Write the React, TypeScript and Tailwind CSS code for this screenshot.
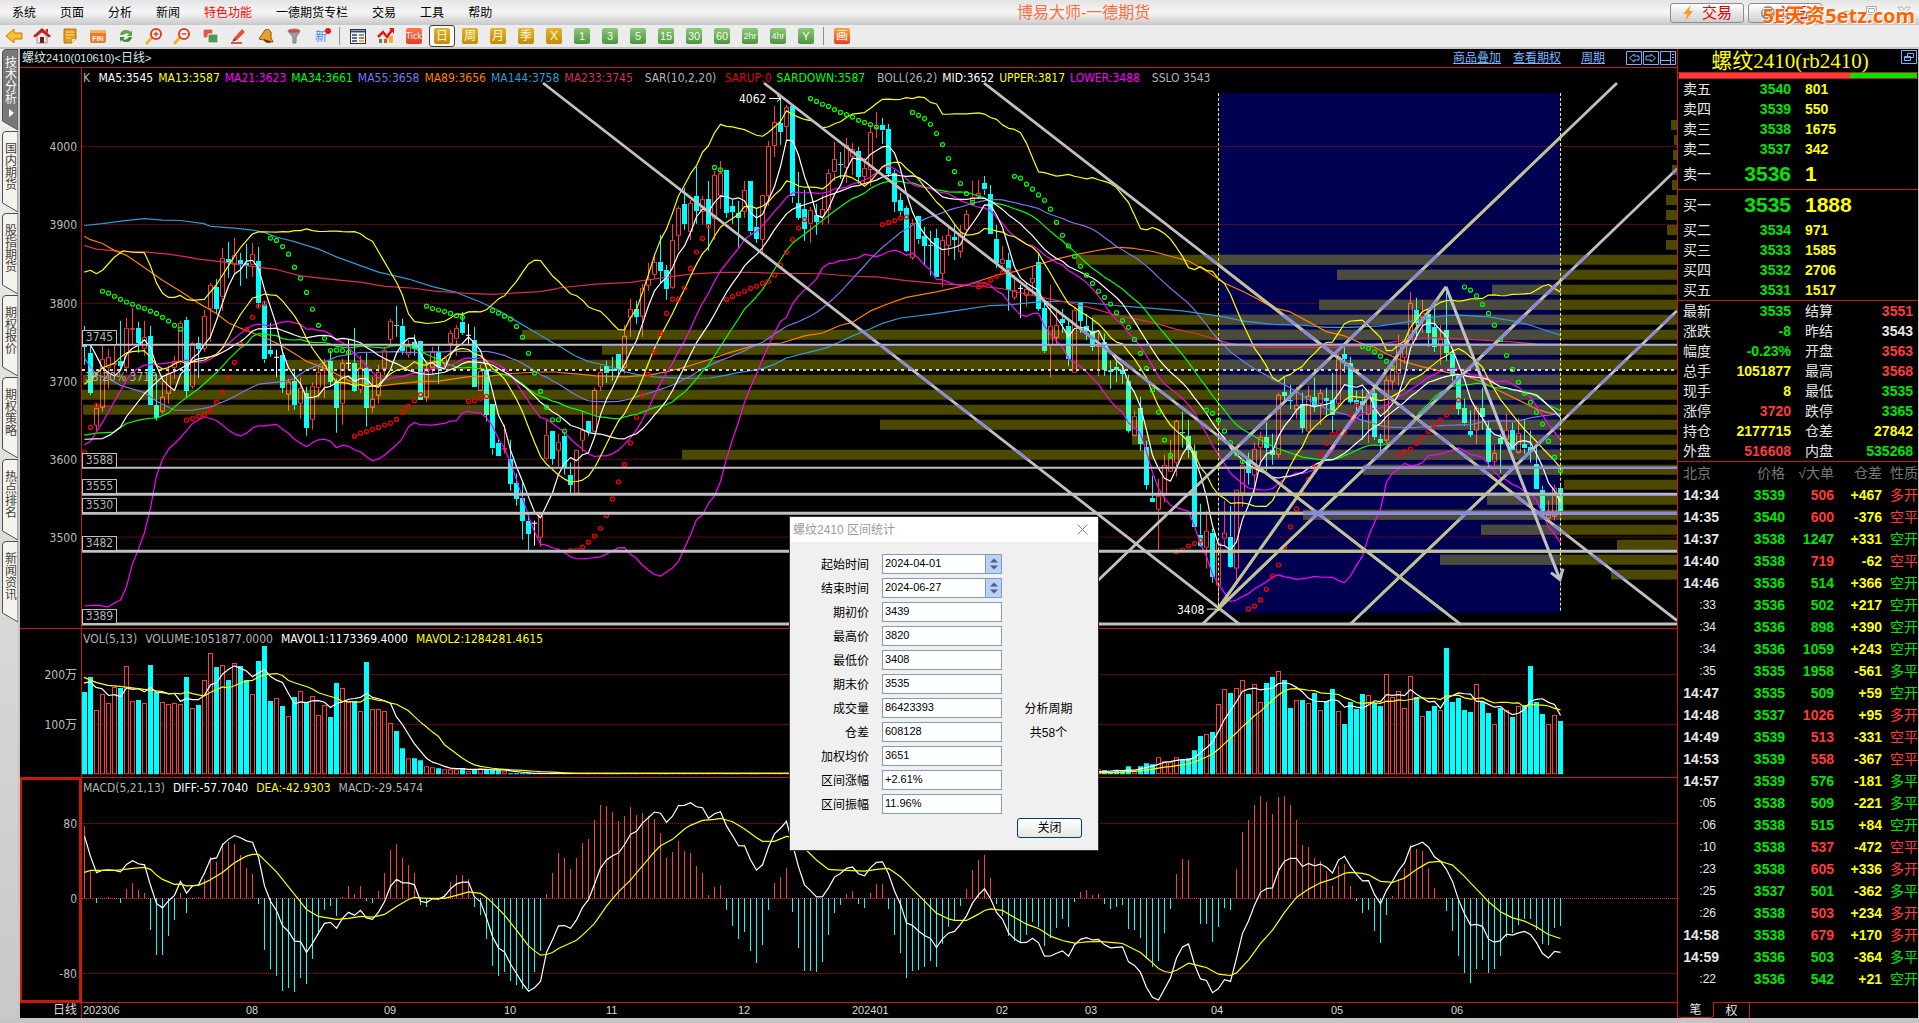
import { useState } from "react";
import type { ReactNode } from "react";
import { clsx } from "clsx";

type Kind = "u" | "d" | "w";
type Point = [number, number];

interface Candle {
  kind: Kind;
  high: number;
  top: number;
  bottom: number;
  low: number;
}

interface Grid {
  x: number;
  y: number;
  sx: number;
  sy: number;
}

// The history is stored in three sections, each on its own grid
const GRIDS: Grid[] = [
  { x: 0, y: 40, sx: 2.8, sy: 2.613 },
  { x: 560, y: 70, sx: 2.8, sy: 2.8 },
  { x: 1120, y: 70, sx: 2.8, sy: 2.8 }
];

const LEFT = 82;
const WIDTH = 1595;
const barX = (i: number) => 84.5 + i * 6;

// kind + high,top,bottom,low
const CANDLES = [
  `d747,797,803,850 d797,818,923,927 u950,962,1008,1022 u800,834,961,972 u808,829,858,912 u800,845,850,886
  d733,838,850,862 u726,753,857,870 u700,752,755,797 d738,752,790,817 u735,775,807,825 d747,773,953,953
  d872,955,988,996 u893,933,972,978 u853,870,925,950 u826,838,857,885 u735,740,843,848 d724,732,918,933
  u790,793,908,912 d775,793,808,883 u706,720,805,815 u635,641,703,790 d625,645,702,716 u543,570,673,708
  d527,573,583,622 u517,562,588,612 d556,575,585,642 d533,583,590,625 u530,560,590,620 d540,578,687,697
  d683,690,835,843 d740,810,820,828 w810,828,828,880 d808,822,908,922 u885,893,928,970 d862,890,953,966
  u882,910,952,990 d908,922,1013,1036 u897,905,994,1018 u852,867,910,935 u833,850,865,935 d813,838,893,908
  d885,893,962,1026 u833,845,952,1006 w780,845,845,860 d753,845,917,920 u827,857,915,922 d818,857,962,1012
  u880,937,960,975 u850,867,930,952 u803,810,860,875 u728,733,782,800 d695,745,748,775 d730,747,813,822
  u783,797,823,830 d770,790,808,825 d787,787,942,942 u845,860,935,945 u802,815,857,872 d798,815,853,900
  u825,830,845,857 u758,765,795,832 u745,753,783,825 d710,737,765,770 w742,770,770,795 d750,783,907,907
  u850,865,918,918 d862,862,980,997 d952,952,1068,1085 d1045,1052,1085,1085 u1005,1066,1068,1083 d1045,1095,1160,1178
  d1133,1158,1200,1217 d1158,1197,1257,1307 d1240,1257,1290,1337 w1257,1262,1262,1322 u1237,1240,1300,1325
  u990,1033,1097,1100 d1022,1022,1095,1110 u1030,1050,1073,1115`,
  `d1013,1025,1115,1135 d1100,1133,1162,1188 u1065,1065,1187,1187 u957,1007,1038,1070 d983,983,1015,1025
  u890,897,1015,1020 u830,845,887,900 d815,830,850,877 d803,838,843,870 d795,795,840,858 u715,745,835,850
  u640,670,695,748 d648,670,692,710 u600,610,690,747 u540,585,605,620 u515,538,575,583 d463,538,562,600
  d545,560,612,643 u430,475,610,612 u380,387,465,503 d330,375,430,447 u363,373,453,475 d272,352,395,430
  u352,360,395,433 d310,360,432,507 u283,293,415,475 u255,287,350,390 d280,280,400,413 d365,380,398,430
  d368,400,413,497 u310,335,397,415 d312,312,453,463 d385,440,473,485 u350,350,477,515 u200,212,353,380
  u100,145,213,243 d80,147,173,210 u98,103,160,197 d102,102,355,372 d285,373,415,420 d335,390,445,478
  u383,393,433,483 d375,405,425,462 u350,390,412,433 u278,287,390,430 u202,250,287,310 d230,262,265,305
  u190,210,275,315 u203,222,245,295 d215,228,300,320 u245,275,300,322 u155,173,280,325 u118,159,161,190
  d133,155,170,207 d150,165,290,300 d280,288,370,397 d345,365,397,412 d380,387,507,510 u418,427,525,532
  d410,410,475,487 d440,465,493,550 d450,490,494,577 d445,470,580,580 u465,475,570,607 u440,463,493,520
  d430,468,475,533 u435,455,507,525 u393,402,447,455 u310,355,373,378 u307,343,350,362 d297,317,335,350
  d323,347,458,458 d435,473,540,555 u493,530,545,565 d513,532,617,675 u573,615,637,645 w603,610,610,693
  u595,613,633,663 u550,583,597,630 d512,537,668,675 d645,667,787,793 u603,717,773,860 u665,715,750,770
  d670,697,707,735 d695,717,810,830 u665,673,850,852 d653,653,702,735 d683,717,730,757 d695,730,775,787
  u735,770,772,857 d740,762,840,857 d815,840,845,892 d812,832,840,873`,
  `d830,840,852,880 d855,870,1010,1015 u955,970,1027,1027 d915,945,1047,1067 d1040,1055,1162,1175
  d1137,1198,1210,1210 u1145,1193,1233,1350 u1078,1107,1195,1213 u1035,1087,1127,1127 u980,983,1100,1140
  d958,1013,1016,1057 d980,1025,1063,1087 d1050,1067,1280,1280 d1215,1303,1333,1335 u1235,1290,1337,1397
  d1285,1297,1420,1435 u1325,1325,1445,1500 u1208,1297,1315,1333 d1220,1308,1392,1395 u1177,1177,1398,1430
  u1093,1105,1185,1223 d1072,1090,1128,1163 u1045,1060,1135,1190 u1013,1027,1057,1100 d988,1027,1057,1123
  d1018,1063,1078,1105 u905,910,1077,1087 d862,902,913,930 d882,925,928,950 u887,937,950,978 d905,935,1002,1015
  u885,913,1013,1018 d862,915,940,957 u893,905,935,993 d890,917,925,972 d848,925,968,1015 u795,800,933,940
  d770,795,810,848 d803,820,930,935 d900,925,937,958 d893,927,937,1035 u897,903,965,1043 d893,903,1027,1035
  d1020,1033,1045,1075 u860,867,1037,1043 u815,835,873,895 u742,773,850,885 u755,770,805,822 u622,653,770,772
  d638,672,707,755 u645,680,693,735 d680,683,735,775 d663,720,775,790 u713,753,770,825 d615,728,793,815
  d785,795,857,870 d857,857,948,967 d922,947,990,997 d955,1010,1020,1028 u940,947,1010,1047 d890,945,970,1007
  d983,1003,1097,1113 u1050,1073,1097,1110 d1020,1030,1047,1127 u963,1008,1035,1050 d987,1007,1063,1063
  u973,1015,1070,1075 d980,1048,1060,1075 d1010,1055,1070,1100 d1050,1103,1172,1172 d1165,1177,1237,1240
  u1207,1245,1255,1262 u1162,1170,1250,1262 d1160,1170,1235,1235`
];

const candles: Candle[] = CANDLES.flatMap((block, s) =>
  block
    .trim()
    .split(/\s+/)
    .map((item) => {
      const [high, top, bottom, low] = item
        .slice(1)
        .split(",")
        .map((v) => GRIDS[s].y + Number(v) / GRIDS[s].sy);
      return { kind: item[0] as Kind, high, top, bottom, low };
    })
);

const nums = (src: string) => src.trim().split(/\s+/).map(Number);

const trace = (...parts: string[]): Point[] =>
  parts.flatMap((part, s) =>
    part
      .trim()
      .split(/\s+/)
      .filter(Boolean)
      .map((pair): Point => {
        const [x, y] = pair.split(",").map(Number);
        const g = GRIDS[s];
        return [g.x + x / g.sx, g.y + y / g.sy];
      })
  );

const toPath = (points: Point[]) => "M" + points.map(([x, y]) => `${x.toFixed(1)} ${y.toFixed(1)}`).join("L");

const closes = candles.map((c) => (c.kind === "u" ? c.top : c.bottom));

function average(values: number[], n: number): Point[] {
  const out: Point[] = [];
  for (let i = n - 1; i < values.length; i++) {
    const sum = values.slice(i - n + 1, i + 1).reduce((a, b) => a + b, 0);
    out.push([barX(i), sum / n]);
  }
  return out;
}

function band(values: number[], n: number, k: number): Point[] {
  return average(values, n).map(([x, mid], j) => {
    const part = values.slice(j, j + n);
    const dev = Math.sqrt(part.reduce((a, v) => a + (v - mid) ** 2, 0) / n);
    return [x, mid + k * dev];
  });
}

const MA_LINES = [
  {
    color: "#2f9bd8",
    d: toPath(
      trace(
        "236,485 287,480 345,473 404,467 455,471 505,472 570,480 590,487 656,492 707,497 740,503 774,515 824,527 892,547 942,567 1009,590 1060,607 1144,625 1211,645 1278,660 1345,685 1396,707 1446,735 1496,763 1560,798",
        "0,775 40,800 80,817 130,828 180,845 214,853 264,860 350,864 420,863 466,855 499,848 567,837 600,825 634,807 701,790 751,777 819,745 869,725 903,710 953,695 1037,685 1138,670 1205,660 1256,658 1340,650 1390,648 1474,652 1557,660",
        "0,661 91,668 175,675 242,685 292,692 343,703 427,713 511,715 578,721 645,721 729,717 796,707 847,698 914,688 948,687 1032,692 1099,703 1149,715 1199,732 1233,743"
      )
    )
  },
  {
    color: "#d83050",
    d: toPath(
      trace(
        "236,537 270,547 337,553 404,554 472,560 522,567 556,573 623,580 690,590 774,600 841,617 942,627 1009,633 1077,644 1160,649 1211,656 1295,662 1379,665 1446,661 1513,658 1560,650",
        "0,610 100,600 197,595 281,583 365,572 449,567 533,567 617,570 735,571 819,578 886,580 970,590 1054,598 1121,603 1188,607 1239,613 1306,628 1373,642 1440,655 1507,672 1557,687",
        "0,690 57,700 108,712 158,727 208,737 259,752 309,767 376,776 444,777 595,777 679,773 746,765 796,757 864,750 931,752 1015,757 1099,762 1166,768 1233,772"
      )
    )
  },
  {
    color: "#ff8000",
    d: toPath(
      trace(
        "236,513 253,522 287,532 320,550 354,563 404,595 455,628 505,657 556,688 606,715 640,740 690,760 740,777 790,800 824,820 858,840 892,852 925,865 975,890 1009,902 1060,905 1130,897 1177,893 1228,892 1312,880 1379,878 1429,872 1513,868 1560,868",
        "0,848 60,853 100,857 180,860 250,855 300,845 350,833 416,812 466,795 550,770 620,765 685,745 735,737 785,715 819,707 869,675 919,655 970,637 1054,622 1138,603 1222,575 1272,565 1340,545 1390,530 1440,518 1507,505 1557,497",
        "0,497 40,500 90,508 141,522 192,535 242,563 292,597 343,620 376,637 427,665 477,678 527,705 578,733 628,745 679,767 713,777 746,795 796,817 847,832 897,843 931,850 965,855 1015,875 1065,900 1116,925 1166,950 1199,960 1233,968"
      )
    )
  },
  {
    color: "#7878f0",
    d: toPath([
      ...trace(
        "236,832 270,875 304,885 337,903 404,922 440,945 488,968 539,968 589,960 640,940 690,915 724,900 790,893 824,885 858,863 892,850 942,828 1009,817 1110,815"
      ),
      ...average(closes, 55)
    ])
  },
  {
    color: "#00ff00",
    d: toPath([
      ...trace(
        "236,1033 270,1028 320,1025 354,1003 388,994 421,989 438,989 472,975 488,960 522,935 556,912 606,870 640,835 673,805 690,795 707,775 724,768 774,773"
      ),
      ...average(closes, 34)
    ])
  },
  {
    color: "#ff00ff",
    d: toPath([
      ...trace(
        "236,1058 253,1050 287,1000 320,945 354,890 371,868 404,850 455,846 505,840 522,837 556,843"
      ),
      ...average(closes, 21)
    ])
  },
  {
    color: "#ffffff",
    d: toPath([
      ...trace("236,1044 287,1042 310,1032 337,1012 354,985 404,925 455,880 500,862 550,835 606,825 640,808"),
      ...average(closes, 26)
    ])
  },
  {
    color: "#ffff00",
    d: toPath([
      ...trace("236,900 253,888 270,873 287,857 320,845 337,830 354,818 371,815 404,812 421,830"),
      ...average(closes, 13)
    ])
  },
  {
    color: "#ffff00",
    d: toPath([
      ...trace(
        "236,607 253,602 270,611 287,602 320,568 345,551 371,555 404,556 421,590 438,635 455,662 472,673 488,673 505,668 522,678 539,681 572,678 606,640 623,615 640,590"
      ),
      ...band(closes, 26, -2)
    ])
  },
  {
    color: "#ff00ff",
    d: toPath([
      ...trace(
        "236,1480 270,1478 304,1482 320,1472 337,1465 354,1430 371,1370 388,1330 404,1290 421,1225 438,1140 455,1097 472,1070 505,1040 539,1003 572,985 606,995 640,1020"
      ),
      ...band(closes, 26, 2)
    ])
  },
  {
    color: "#ffffff",
    d: toPath([...trace("253,797 270,826 287,857"), ...average(closes, 5)])
  }
];

// section, first bar, trend, values
const SAR: [number, number, Kind, string][] = [
  [0, 0, "u", "1078 1013 955"],
  [0, 3, "d", "657 662 670 678 685 691 698 702 709 715 725 735 746 756"],
  [0, 17, "u", "994 990 984 979 968 947 921 884 843 796 757 725 696 688"],
  [0, 31, "d", "518 524 540 560 594 623 660 704 746 780 812 811 812 817"],
  [0, 45, "u", "1036 1028 1024 1018 1013 1007 1002 992 973 958 943 927"],
  [0, 57, "d", "696 702 706 710 715 721 725"],
  [0, 64, "u", "945 943 937 932"],
  [0, 68, "d", "707 714 722 730 749 777 819 871 919 960 993 993"],
  [1, 80, "d", "1012"],
  [1, 81, "u", "1347 1345 1337 1323 1306 1284 1248 1202 1154 1105 1045 973 911 853 790 738 682 642 642 611 556 510 472 438"],
  [1, 105, "d", "273 280"],
  [1, 107, "u", "643 635 627 620 612 606 598 592 575 547 510 475 443 419"],
  [1, 121, "d", "80 88 96 102 111 119 125 132 141 147 153 160"],
  [1, 133, "u", "433 427 422 415 412"],
  [1, 138, "d", "119 127 136 152 178 209 248 285 318 346 371"],
  [1, 149, "u", "607 600 589 578 567 562"],
  [1, 155, "d", "298 303 320 334 350 365 390 427 463 493 522 550 575 598 620 637 656 680"],
  [2, 173, "d", "702 721 755 794 836 897 959 1037 1080"],
  [2, 182, "u", "1350 1345 1334 1327 1318"],
  [2, 187, "d", "953 962 981 1012 1044 1075 1097"],
  [2, 194, "u", "1510 1502 1485 1455 1418 1387 1337 1280 1230 1187 1147 1112 1077 1046 1021 1015 1015 967 937"],
  [2, 213, "d", "775 780 790 802 816 833"],
  [2, 219, "u", "1077 1069 1062 1046 1029 1013 995 981 967 945 925"],
  [2, 230, "d", "608 617 633 657 682 715 755 800 839 875 906 931 959 992 1040 1085 1122"]
];

// left edge of each price-distribution bar, top to bottom
const CHIPS = nums(
  "1671 1674 1673 1672 1672 1666 1666 1667 1666 1076 1337 1492 1319 1092 522 602 286 83 82 83 880 1132 682 1363 1564 1487 1303 1481 1617 1440 1611"
);

const lowerY = (v: number) => 620 + v / 3;

const volume = [
  ...nums(`216 171 271 223 250 202 204 139 244 240 250 135 217 247 253 250 253 171 265 255 181 100 141 136 180 130 138
  180 223 123 78 243 235 258 289 231 214 247 229 286 256 291 189 205 247 244 274 126 268 268 274 310 333 384 415 414
  420 439 442 444 448 446 446 444 454 448 445 448 450 451 453 458`),
  ...Array(96).fill(460),
  ...nums(`449 448 451 455 452 452 438 452 438 429 433 412 423 425 412 420 415 390 348 343 336 253 208 219 205 181 222
  193 247 189 171 154 180 264 241 240 250 219 271 243 207 274 312 246 267 222 226 250 258 163 232 214 265 169 231 289
  273 258 271 84 246 234 270 276 193 246 279 313 264 271 291 259 256 138 246 282 313 286 303`)
].map(lowerY);

const histogram = nums(`618 751 848 834 831 834 848 807 789 810 819 930 1005 1005 948 900 819 879 836 831 777 711 726
  669 666 672 705 744 762 852 990 1047 1068 1113 1103 1116 1074 1092 1017 935 870 858 888 831 798 822 798 842 848 813
  759 690 672 714 735 759 855 860 837 839 822 786 766 766 777 861 885 957 1038 1068 1056 1083 1095 1107 1107 1056 993
  822 759 699 714 747 714 669 657 600 555 558 576 603 588 561 585 579 588 597 640 714 696 663 693 699 738 759 825 801
  795 870 918 957 936 993 1029 975 870 789 771 744 876 984 1053 1053 1056 1026 945 879 855 822 813 852 864 819 792 792
  867 945 999 1074 1053 1050 1041 1023 1041 972 921 900 858 807 750 720 705 774 852 888 948 963 966 945 906 921 978
  954 924 897 921 846 816 810 825 822 852 867 861 855 927 930 954 1014 1041 1023 939 867 762 717 720 834 912 912 966
  921 864 870 747 636 600 555 528 546 582 531 528 555 600 675 681 714 723 753 798 738 732 798 843 879 870 933 969 885
  828 777 744 675 687 693 744 804 834 873 933 1008 1059 1089 1047 1020 1059 1047 1008 951 939 915 897 897 930 972 975
  924 918`).map(lowerY);

const DEA_KEYS = `0:757 1:751 5:751 8:745 10:742 11:748 12:765 13:778 15:793 16:792 17:797 19:796 21:779 23:757 25:728
  27:708 28:703 29:703 30:720 32:755 34:800 36:845 37:868 39:889 42:898 44:895 46:889 48:891 50:883 52:859 54:838
  55:832 57:835 60:835 62:826 64:815 66:820 67:832 68:848 70:885 72:930 74:977 75:992 76:1005 77:1003 78:997 79:985
  82:960 83:945 85:910 87:858 89:815 91:780 93:737 95:695 96:677 98:658 100:627 101:616 103:601 105:598 106:595
  108:605 110:627 112:653 113:664 115:664 117:649 118:652 119:665 120:685 122:720 124:748 127:751 130:753 132:748
  134:745 136:770 138:807 140:843 142:879 144:896 145:901 147:901 149:882 150:871 151:866 153:871 155:892 157:912
  159:925 161:948 163:961 165:969 167:965 169:964 173:970 176:997 178:1028 179:1045 180:1054 181:1057 182:1050
  184:1029 187:1042 189:1062 191:1066 192:1058 194:1020 196:970 198:930 200:877 202:832 204:807 206:788 208:777
  210:760 211:757 213:760 214:764 216:784 218:787 220:774 222:748 224:727 226:724 228:735 230:769 232:807 234:845
  236:875 238:893 240:903 242:920 244:943 246:955`
  .split(/\s+/)
  .map((k) => k.split(":").map(Number));

const ZERO = lowerY(835);

const dea: number[] = histogram.map((_, i) => {
  const next = DEA_KEYS.findIndex(([at]) => at >= i);
  const [b, vb] = DEA_KEYS[next];
  if (b === i) return lowerY(vb);
  const [a, va] = DEA_KEYS[next - 1];
  return lowerY(va + ((vb - va) * (i - a)) / (b - a));
});
const diff = dea.map((v, i) => v + (histogram[i] - ZERO) / 2);

const wicks = (kind: Kind) =>
  candles
    .map((c, i) => {
      if (c.kind !== kind) return "";
      const x = barX(i);
      return `M${x} ${Math.round(c.high)}V${Math.round(c.top)}M${x} ${Math.round(c.bottom)}V${Math.round(c.low)}`;
    })
    .join("");

const bodies = (kind: Kind, inset: number) =>
  candles
    .map((c, i) => {
      if (c.kind !== kind) return "";
      const x = barX(i) - 2.5 + inset;
      const y = Math.round(c.top) + inset;
      const h = Math.max(1, Math.round(c.bottom - c.top) - inset * 2);
      const w = 5 - inset * 2;
      return `M${x} ${y}h${w}v${h}h${-w}z`;
    })
    .join("");

const UP_WICKS = wicks("u");
const DOWN_WICKS = wicks("d");
const FLAT_WICKS = wicks("w");
const UP_BODIES = bodies("u", 0.5);
const DOWN_BODIES = bodies("d", 0);

function Candles({ up, down, clip }: { up: string; down: string; clip?: string }) {
  return (
    <g clipPath={clip} fill="none" shapeRendering="crispEdges">
      <path d={UP_WICKS} stroke={up} />
      <path d={UP_BODIES} stroke={up} />
      <path d={DOWN_WICKS} stroke={down} />
      <path d={DOWN_BODIES} fill={down} />
    </g>
  );
}

function TrendLines({ stroke, clip }: { stroke: string; clip?: string }) {
  return (
    <g clipPath={clip} stroke={stroke} fill="none">
      <path d="M82 345H1677M82 468H1677" strokeWidth="2" />
      <path d="M82 494.5H1677M82 513.5H1677M82 551.5H1677M82 624.5H1677" strokeWidth="3" />
      <path
        d="M543 83L1240 625M764 83L1461 625M984 83L1677 621M1052 625L1617 83M1202 625L1677 169M1350 625L1677 311M1218 609L1446 287"
        strokeWidth="2.8"
      />
    </g>
  );
}

function Rows({ ys }: { ys: number[] }) {
  return (
    <path
      d={ys.map((y) => `M82 ${y}H1677`).join("")}
      stroke="#b00000"
      strokeDasharray="1 1"
      shapeRendering="crispEdges"
    />
  );
}

interface PaneProps {
  top: number;
  height: number;
  labels: [string, number][];
  legend: [string, string][];
  active?: boolean;
  wide?: boolean;
  children: ReactNode;
  overlay?: ReactNode;
}

function Pane({ top, height, labels, legend, active, wide, children, overlay }: PaneProps) {
  return (
    <section className="flex min-h-0 border-t border-[#c81818]">
      <div
        className={clsx(
          "relative w-[62px] shrink-0 border-r border-[#c81818] text-[#bcbcbc]",
          active && "inset-ring-2 inset-ring-[#c81808]"
        )}
      >
        {labels.map(([text, y]) => (
          <span
            key={text}
            className="absolute right-1 -translate-y-1/2 [font-family:'DejaVu_Sans_Condensed','Noto_Sans','Noto_Sans_CJK_SC',sans-serif]"
            style={{ top: `${((y - top) / height) * 100}%` }}
          >
            {text}
          </span>
        ))}
      </div>
      <div className="relative min-w-0 flex-1">
        <svg
          className="absolute inset-0 h-full w-full"
          viewBox={`${LEFT} ${top} ${WIDTH} ${height}`}
          preserveAspectRatio="none"
        >
          {children}
        </svg>
        <div
          className={clsx(
            "absolute top-px left-px flex whitespace-nowrap leading-[18px] [font-family:'DejaVu_Sans_Condensed','Noto_Sans',sans-serif]",
            wide ? "gap-2" : "gap-[5px]"
          )}
        >
          {legend.map(([text, color], i) => (
            <span key={i} style={{ color }}>
              {text}
            </span>
          ))}
        </div>
        {overlay}
      </div>
    </section>
  );
}

const LEVELS: [string, number][] = [
  ["3745", 345],
  ["3588", 468],
  ["3555", 494],
  ["3530", 513],
  ["3482", 551],
  ["3389", 624]
];

const at = (x: number, y: number) => ({
  left: `${((x - LEFT) / WIDTH) * 100}%`,
  top: `${((y - 68) / 560) * 100}%`
});

function PricePane() {
  return (
    <Pane
      top={68}
      height={560}
      labels={[
        ["4000", 147],
        ["3900", 225],
        ["3800", 304],
        ["3700", 382],
        ["3600", 460],
        ["3500", 538]
      ]}
      legend={[
        ["K\u00a0", "#b4b4b4"],
        ["MA5:3545", "#ffffff"],
        ["MA13:3587", "#ffff00"],
        ["MA21:3623", "#ff00ff"],
        ["MA34:3661", "#00ff00"],
        ["MA55:3658", "#7878f0"],
        ["MA89:3656", "#ff8000"],
        ["MA144:3758", "#2f9bd8"],
        ["MA233:3745", "#d83050"],
        ["\u00a0\u00a0SAR(10,2,20)", "#b4b4b4"],
        ["\u00a0SARUP:0", "#e00000"],
        ["SARDOWN:3587", "#00ff00"],
        ["\u00a0\u00a0BOLL(26,2)", "#b4b4b4"],
        ["MID:3652", "#ffffff"],
        ["UPPER:3817", "#ffff00"],
        ["LOWER:3488", "#ff00ff"],
        ["\u00a0\u00a0SSLO 3543", "#b4b4b4"]
      ]}
      overlay={
        <div className="leading-[13px] text-[#b4b4b4] [font-family:'DejaVu_Sans_Condensed','Noto_Sans',sans-serif]">
          {LEVELS.map(([text, y]) => (
            <span
              key={text}
              className="absolute w-[35px] -translate-y-full border border-[#c0c0c0] bg-black text-center"
              style={at(82, y)}
            >
              {text}
            </span>
          ))}
          <span className="absolute -translate-y-1/2" style={at(85, 377)}>
            38.20% 3713
          </span>
          <span className="absolute -translate-y-1/2 text-white" style={at(739, 99)}>
            4062
          </span>
          <span className="absolute -translate-y-1/2 text-white" style={at(1177, 610)}>
            3408
          </span>
        </div>
      }
    >
      <defs>
        <clipPath id="chips">
          {CHIPS.map((x, k) => (
            <rect key={k} x={x} y={120 + k * 15} width={1677 - x} height="10" />
          ))}
        </clipPath>
        <clipPath id="range">
          <rect x="1218" y="93" width="343" height="520" />
        </clipPath>
      </defs>
      <rect x="1218" y="93" width="343" height="520" fill="#000050" />
      <Rows ys={[146.5, 224.5, 303.5, 381.5, 459.5, 537.5]} />
      <rect x="82" y="68" width="1595" height="560" fill="#4b4800" clipPath="url(#chips)" />
      <g clipPath="url(#range)">
        <rect x="82" y="68" width="1595" height="560" fill="#4b4a3e" clipPath="url(#chips)" />
      </g>
      <Candles up="#ff3c3c" down="#00ffff" />
      <Candles up="#ff7830" down="#4bffb0" clip="url(#chips)" />
      <path d={FLAT_WICKS} stroke="#fff" shapeRendering="crispEdges" />
      {candles.map((c, i) =>
        c.kind === "w" ? <rect key={i} x={barX(i) - 2.5} y={Math.round(c.top)} width="5" height="1" fill="#fff" /> : null
      )}
      {MA_LINES.map((line, i) => (
        <path key={i} d={line.d} stroke={line.color} strokeWidth="1.2" strokeLinejoin="round" fill="none" />
      ))}
      {SAR.flatMap(([s, first, kind, src]) =>
        nums(src).map((v, j) => (
          <circle
            key={first + j}
            cx={barX(first + j)}
            cy={GRIDS[s].y + v / GRIDS[s].sy}
            r="2"
            fill="none"
            stroke={kind === "u" ? "#ff0000" : "#00ff00"}
            strokeWidth="1.2"
          />
        ))
      )}
      <path d="M82 370H1677" stroke="#d0d0d0" strokeWidth="2" strokeDasharray="3 4" shapeRendering="crispEdges" />
      <TrendLines stroke="#c0c0c0" />
      <TrendLines stroke="#c0c090" clip="url(#range)" />
      <TrendLines stroke="#8888e0" clip="url(#chips)" />
      <path
        d="M1218.5 93V613M1560.5 93V613"
        stroke="#ffff00"
        strokeDasharray="3 2"
        shapeRendering="crispEdges"
      />
      <path d="M1446 287L1560 580M1551 573L1560 580L1563 569" stroke="#c0c0c0" strokeWidth="3" fill="none" />
      <path d="M769 98.5H781M777 95.5l4 3l-4 3M1207 609.5H1216" stroke="#fff" fill="none" />
    </Pane>
  );
}

function VolumePane() {
  const solid = volume.map((y, i) => (candles[i].kind === "d" ? `M${barX(i) - 2.5} ${y.toFixed(0)}h5V774h-5z` : ""));
  const hollow = volume.map((y, i) =>
    candles[i].kind === "d" ? "" : `M${barX(i) - 2} ${Math.round(y) + 0.5}h4V773.5h-4z`
  );
  return (
    <Pane
      top={629}
      height={148}
      wide
      labels={[
        ["200万", 675],
        ["100万", 725]
      ]}
      legend={[
        ["VOL(5,13)", "#b4b4b4"],
        ["VOLUME:1051877.0000", "#b4b4b4"],
        ["MAVOL1:1173369.4000", "#ffffff"],
        ["MAVOL2:1284281.4615", "#ffff00"]
      ]}
    >
      <Rows ys={[674.5, 724.5]} />
      <path d={solid.join("")} fill="#00ffff" />
      <path d={hollow.join("")} fill="none" stroke="#ff3c3c" />
      <path
        d={toPath([[84, 683], [90, 681.7], [96, 687.3], [102, 688.7], ...average(volume, 5)])}
        fill="none"
        stroke="#fff"
        strokeWidth="1.2"
      />
      <path
        d={toPath([[84, 677.3], [96, 682.3], [108, 685.3], [120, 686.3], [144, 689.3], ...average(volume, 13)])}
        fill="none"
        stroke="#ff0"
        strokeWidth="1.2"
      />
    </Pane>
  );
}

function MacdPane() {
  const sticks = (up: boolean) =>
    histogram
      .map((y, i) => (y < ZERO === up ? `M${barX(i)} ${ZERO.toFixed(0)}V${y.toFixed(0)}` : ""))
      .join("");
  return (
    <Pane
      top={778}
      height={224}
      active
      wide
      labels={[
        ["80", 824],
        ["0", 899],
        ["-80", 974]
      ]}
      legend={[
        ["MACD(5,21,13)", "#b4b4b4"],
        ["DIFF:-57.7040", "#ffffff"],
        ["DEA:-42.9303", "#ffff00"],
        ["MACD:-29.5474", "#b4b4b4"]
      ]}
    >
      <Rows ys={[823.5, 973.5]} />
      <path d="M82 898.5H1677" stroke="#ff2020" strokeDasharray="1 1" shapeRendering="crispEdges" />
      <path d={sticks(true)} stroke="#ff3c3c" shapeRendering="crispEdges" />
      <path d={sticks(false)} stroke="#00ffff" shapeRendering="crispEdges" />
      <path
        d={toPath(diff.map((y, i): Point => [barX(i), y]))}
        fill="none"
        stroke="#fff"
        strokeWidth="1.2"
      />
      <path
        d={toPath(dea.map((y, i): Point => [barX(i), y]))}
        fill="none"
        stroke="#ff0"
        strokeWidth="1.2"
      />
    </Pane>
  );
}

const MONTHS: [string, number][] = [
  ["202306", 83],
  ["08", 246],
  ["09", 384],
  ["10", 504],
  ["11", 606],
  ["12", 738],
  ["202401", 852],
  ["02", 996],
  ["03", 1085],
  ["04", 1211],
  ["05", 1331],
  ["06", 1451]
];

function ChartArea() {
  return (
    <main className="flex min-w-0 flex-1 flex-col bg-black">
      <div className="flex h-[18px] shrink-0 items-center pl-0.5 text-[#d8e8e8]">
        <span>
          螺纹<span className="text-[11px]">2410(010610)&lt;</span>日线<span className="text-[11px]">&gt;</span>
        </span>
        <nav className="mr-px ml-auto flex items-center text-[#78b4ff]">
          <a href="#overlay" className="mr-3 underline">
            商品叠加
          </a>
          <a href="#options" className="mr-5 underline">
            查看期权
          </a>
          <a href="#period" className="mr-[21px] underline">
            周期
          </a>
          <button aria-label="上一个" className="mr-px">
            <svg width="16" height="14" fill="none" stroke="currentColor">
              <path d="M.5.5h15v13H.5zM8 3L3.500 7L8 11V9h5V5H8z" />
            </svg>
          </button>
          <button aria-label="下一个" className="mr-px">
            <svg width="16" height="14" fill="none" stroke="currentColor">
              <path d="M.5.5h15v13H.5zM8 3l4.500 4L8 11V9H3V5h5z" />
            </svg>
          </button>
          <button aria-label="布局">
            <svg width="16" height="14" fill="none" stroke="currentColor">
              <path d="M.5.5h15v13H.5zM10.500 .5v13M.5 9.500h10M12 3.500h2M12 6.500h2M12 9.500h2" />
            </svg>
          </button>
        </nav>
      </div>
      <div className="grid min-h-0 flex-1 grid-rows-[560fr_149fr_225fr]">
        <PricePane />
        <VolumePane />
        <MacdPane />
      </div>
      <div className="flex h-4 shrink-0 border-t border-[#c81818] text-[11px] leading-[15px] text-[#d8d8d8]">
        <div className="w-[62px] shrink-0 border-r border-[#c81818] pr-1 text-right text-xs leading-[15px]">日线</div>
        <div className="relative flex-1">
          {MONTHS.map(([text, x]) => (
            <span key={text} className="absolute" style={{ left: `${((x - LEFT) / WIDTH) * 100}%` }}>
              {text}
            </span>
          ))}
        </div>
      </div>
    </main>
  );
}

const GREEN = "text-[#00e600]";
const RED = "text-[#ff3c3c]";
const YELLOW = "text-[#ffff00]";
const WHITE = "text-[#e6e6e6]";

const ASKS = [
  ["卖五", "3540", "801"],
  ["卖四", "3539", "550"],
  ["卖三", "3538", "1675"],
  ["卖二", "3537", "342"],
  ["卖一", "3536", "1"]
];

const BIDS = [
  ["买一", "3535", "1888"],
  ["买二", "3534", "971"],
  ["买三", "3533", "1585"],
  ["买四", "3532", "2706"],
  ["买五", "3531", "1517"]
];

const STATS = [
  ["最新", "3535", GREEN, "结算", "3551", RED],
  ["涨跌", "-8", GREEN, "昨结", "3543", WHITE],
  ["幅度", "-0.23%", GREEN, "开盘", "3563", RED],
  ["总手", "1051877", YELLOW, "最高", "3568", RED],
  ["现手", "8", YELLOW, "最低", "3535", GREEN],
  ["涨停", "3720", RED, "跌停", "3365", GREEN],
  ["持仓", "2177715", YELLOW, "仓差", "27842", YELLOW],
  ["外盘", "516608", RED, "内盘", "535268", GREEN]
];

const TRADES: [string, string, string, string, string, boolean][] = [
  ["14:34", "3539", "506", "+467", "多开", true],
  ["14:35", "3540", "600", "-376", "空平", true],
  ["14:37", "3538", "1247", "+331", "空开", false],
  ["14:40", "3538", "719", "-62", "空平", true],
  ["14:46", "3536", "514", "+366", "空开", false],
  [":33", "3536", "502", "+217", "空开", false],
  [":34", "3536", "898", "+390", "空开", false],
  [":34", "3536", "1059", "+243", "空开", false],
  [":35", "3535", "1958", "-561", "多平", false],
  ["14:47", "3535", "509", "+59", "空开", false],
  ["14:48", "3537", "1026", "+95", "多开", true],
  ["14:49", "3539", "513", "-331", "空平", true],
  ["14:53", "3539", "558", "-367", "空平", true],
  ["14:57", "3539", "576", "-181", "多平", false],
  [":05", "3538", "509", "-221", "多平", false],
  [":06", "3538", "515", "+84", "空开", false],
  [":10", "3538", "537", "-472", "空平", true],
  [":23", "3538", "605", "+336", "多开", true],
  [":25", "3537", "501", "-362", "多平", false],
  [":26", "3538", "503", "+234", "多开", true],
  ["14:58", "3538", "679", "+170", "多开", true],
  ["14:59", "3536", "503", "-364", "多平", false],
  [":22", "3536", "542", "+21", "空开", false]
];

function DepthTable({ rows, best }: { rows: string[][]; best: string }) {
  return (
    <table className="w-full table-fixed border-b border-[#c81818] text-left">
      <tbody>
        {rows.map(([name, price, qty]) => (
          <tr key={name} className={name === best ? "h-[30px]" : "h-5"}>
            <th className="w-12 pl-[5px] font-normal text-[#e6e6e6]">{name}</th>
            <td
              className={clsx("w-[65px] text-right font-bold", GREEN, name === best && "text-[21px] leading-[30px]")}
            >
              {price}
            </td>
            <td className={clsx("pl-[14px] font-bold", YELLOW, name === best && "text-[21px] leading-[30px]")}>
              {qty}
            </td>
          </tr>
        ))}
      </tbody>
    </table>
  );
}

function QuotePanel() {
  return (
    <aside className="flex w-[242px] shrink-0 flex-col border-r border-l border-r-[#c8c4c4] border-l-[#c81818] bg-black text-sm leading-5">
      <div className="relative flex h-6 shrink-0 items-center justify-center border-b border-[#c81818]">
        <h2 className="pr-4 text-[21px] leading-6 whitespace-nowrap text-[#ffff00] [font-family:'Liberation_Serif','Noto_Sans_CJK_SC',serif]">
          螺纹2410(rb2410)
        </h2>
        <button aria-label="切换窗口" className="absolute top-px right-px text-[#78b4ff]">
          <svg width="16" height="14" fill="none" stroke="currentColor">
            <path d="M.5.5h15v13H.5zM3.500 6.500h6v4h-6zM3 7.500h7M6.500 6V3.500h6v4H10" />
          </svg>
        </button>
      </div>
      <div className="flex h-1.5 shrink-0 border-b border-[#c81818] px-px">
        <div className="w-[72%] bg-[#ff3c3c]" />
        <div className="flex-1 bg-[#00e600]" />
      </div>
      <DepthTable rows={ASKS} best="卖一" />
      <DepthTable rows={BIDS} best="买一" />
      <table className="w-full table-fixed border-b border-[#c81818]">
        <tbody>
          {STATS.map(([a, va, ca, b, vb, cb]) => (
            <tr key={a} className="h-5">
              <th className="w-12 pl-[5px] text-left font-normal text-[#e6e6e6]">{a}</th>
              <td className={clsx("w-[65px] text-right font-bold", ca)}>{va}</td>
              <th className="w-12 pl-[14px] text-left font-normal whitespace-nowrap text-[#e6e6e6]">{b}</th>
              <td className={clsx("pr-[5px] text-right font-bold", cb)}>{vb}</td>
            </tr>
          ))}
        </tbody>
      </table>
      <table className="w-full table-fixed text-right font-bold whitespace-nowrap">
        <thead>
          <tr className="h-[22px] text-[#787878]">
            <th className="w-[41px] pl-[5px] text-left font-normal">北京</th>
            <th className="w-[66px] font-normal">价格</th>
            <th className="w-[49px] font-normal">√大单</th>
            <th className="w-12 font-normal">仓差</th>
            <th className="font-normal">性质</th>
          </tr>
        </thead>
        <tbody>
          {TRADES.map(([time, price, qty, change, kind, up], i) => (
            <tr key={i} className={clsx("h-[22px]", GREEN)}>
              <td className={clsx(WHITE, time.length < 4 && "pr-[3px] text-xs font-normal")}>{time}</td>
              <td>{price}</td>
              <td className={up ? RED : GREEN}>{qty}</td>
              <td className={YELLOW}>{change}</td>
              <td className={clsx("font-normal", up ? RED : GREEN)}>{kind}</td>
            </tr>
          ))}
        </tbody>
      </table>
      <div className="mt-auto flex h-4 shrink-0 text-xs leading-4 text-[#e6e6e6]">
        <button className="w-9 rounded-b-sm border-r border-b border-[#c81818]">笔</button>
        <button className="w-9 border-t border-r border-[#c81818]">权</button>
        <div className="flex-1 border-t border-[#c81818]" />
      </div>
    </aside>
  );
}

const SIDE_TABS = ["技术分析", "国内期货", "股指期货", "期权报价", "期权策略", "热点排名", "新闻资讯"];

function SideTabs() {
  const [current, setCurrent] = useState(0);
  return (
    <nav className="flex w-5 shrink-0 flex-col border-r-2 border-[#c8c4c4] bg-linear-to-b from-[#f0f0f0] to-[#c8c8c8]">
      {SIDE_TABS.map((name, i) => (
        <button
          key={name}
          onClick={() => setCurrent(i)}
          className={clsx(
            "relative flex h-[82px] shrink-0 flex-col items-center pt-2 pl-1 leading-3",
            i === current ? "text-white" : "pt-3 text-[#404040]"
          )}
        >
          <svg className="absolute top-0 left-0.5" width="16" height="82">
            <path d="M16 .5H4Q.5.500 .5 4V72L16 81z" fill={i === current ? "#787878" : "#f4f4ec"} stroke="#505050" />
          </svg>
          {name.split("").map((ch) => (
            <span key={ch} className="relative">
              {ch}
            </span>
          ))}
          {i === current && (
            <svg className="relative mt-1" width="5" height="8" fill="#fff">
              <path d="M0 0l5 4l-5 4z" />
            </svg>
          )}
        </button>
      ))}
    </nav>
  );
}

const MENU = ["系统", "页面", "分析", "新闻", "特色功能", "一德期货专栏", "交易", "工具", "帮助"];

function MenuBar() {
  return (
    <header className="relative flex h-[25px] shrink-0 items-center bg-linear-to-b from-[#e4e4e4] via-[#f6f6f6] to-[#c8c8c8] text-black">
      {MENU.map((name) => (
        <button key={name} className={clsx("px-3 leading-6", name === "特色功能" && "text-[#ff0000]")}>
          {name}
        </button>
      ))}
      <h1 className="absolute left-[1017px] text-base leading-6 whitespace-nowrap text-[#ff6a3c]">
        博易大师-一德期货
      </h1>
      <div className="ml-auto flex items-center">
        <button className="mr-1 flex h-5 w-[74px] items-center justify-center gap-2 rounded-[3px] border border-[#8c8c8c] bg-linear-to-b from-white to-[#d0d0d0] text-[15px] text-[#dc0000]">
          <svg width="12" height="16" fill="#f5a020">
            <path d="M9 0L1 9h4L3 16L11 6H7z" />
          </svg>
          交易
        </button>
        <button className="flex h-5 w-[74px] items-center justify-center gap-1 rounded-[3px] border border-[#8c8c8c] bg-linear-to-b from-white to-[#d0d0d0] text-[15px] text-[#dc0000]">
          <svg width="16" height="16" fill="#909090">
            <circle cx="8" cy="8" r="7" />
          </svg>
          论坛
        </button>
        <svg className="mr-2 ml-4" width="73" height="18" fill="none" stroke="#a8a8a8" aria-hidden="true">
          <path
            d="M4.500 7.500h12v3h-12zM28.500 2.500h10v8h-10zM30.500 4.500h6v4h-6zM60 3h4l2 3l2-3h4l-4 5l4 5h-4l-2-3l-2 3h-4l4-5z"
            fill="#fff"
          />
        </svg>
      </div>
      <span className="absolute top-0.5 right-1 text-xl leading-7 font-bold text-[#ff6400] [font-family:'Noto_Sans','Noto_Sans_CJK_SC',sans-serif] [text-shadow:1px_1px_0_#fff,-1px_-1px_0_#fff]">
        5E天资5etz.com
      </span>
    </header>
  );
}

const TOOLS: [string, ReactNode][] = [
  ["后退", <path d="M1 9L9 2v4h8v6H9v4z" fill="#fbc02d" stroke="#c87800" />],
  [
    "主页",
    <>
      <path d="M4 9v7h10V9L9 5z" fill="#e8e8e8" stroke="#909090" />
      <path d="M0 9L9 1l9 8l-2 1.500L9 5L2 10.500zM13 2h2v4l-2-2z" fill="#c81e1e" />
      <path d="M7 10h4v6H7z" fill="#702020" />
    </>
  ],
  [
    "公告",
    <>
      <path d="M3 2h12v10l-4 4H3z" fill="#e69a18" stroke="#b87410" />
      <path d="M5 5h8M5 8h8M5 11h5" stroke="#fbe0a0" />
      <path d="M15 12h-4v4z" fill="#fff0c0" />
    </>
  ],
  [
    "财经",
    <>
      <rect x="1" y="3" width="16" height="13" rx="2" fill="#f07828" />
      <path d="M1 5q0-2 2-2h12q2 0 2 2v1H1z" fill="#f8b060" />
      <text x="9" y="14" fontSize="7" fontWeight="bold" fill="#fff" textAnchor="middle">
        FIN
      </text>
    </>
  ],
  [
    "刷新",
    <>
      <path d="M3 8Q4 3 9 3q3 0 5 2l1-2v6h-5l2-2q-3-2-6 1z" fill="#5aa83c" />
      <path d="M15 10q-1 5-6 5q-3 0-5-2l-1 2v-5h5l-2 2q3 2 6-2z" fill="#3c8c28" />
    </>
  ],
  [
    "放大",
    <>
      <path d="M8 9L2 16" stroke="#f0b428" strokeWidth="3" strokeLinecap="round" />
      <circle cx="11" cy="7" r="5" fill="#fff" stroke="#e03c28" strokeWidth="2" />
      <path d="M8.500 7h5M11 4.500v5" stroke="#e03c28" strokeWidth="1.500" />
    </>
  ],
  [
    "缩小",
    <>
      <path d="M8 9L2 16" stroke="#f0b428" strokeWidth="3" strokeLinecap="round" />
      <circle cx="11" cy="7" r="5" fill="#fff" stroke="#e03c28" strokeWidth="2" />
      <path d="M8.500 7h5" stroke="#e03c28" strokeWidth="1.500" />
    </>
  ],
  [
    "叠加",
    <>
      <rect x="2" y="2" width="10" height="9" rx="1" fill="#e05848" stroke="#fff" />
      <rect x="7" y="7" width="10" height="9" rx="1" fill="#4c9c58" stroke="#fff" />
    </>
  ],
  [
    "画线",
    <>
      <path d="M5 11L13 2l3 3l-8 8z" fill="#e85038" />
      <path d="M5 11l3 2l-5 2z" fill="#6a4030" />
      <path d="M2 16h11" stroke="#d02818" strokeWidth="1.500" />
    </>
  ],
  [
    "预警",
    <>
      <path d="M2 12L8 3q4-2 6 2v6l2 4z" fill="#e8a030" stroke="#8c5010" />
      <path d="M7 12l8 3l-3 1q-5 0-5-4z" fill="#703808" />
    </>
  ],
  [
    "筛选",
    <>
      <path d="M3 4h12l-4 6v6H8v-6z" fill="#a0a0a0" stroke="#787878" />
      <ellipse cx="9" cy="4" rx="6" ry="2" fill="#e04040" stroke="#909090" />
    </>
  ],
  [
    "新功能",
    <>
      <text x="8" y="14" fontSize="12" fill="#3c8ce8" textAnchor="middle">
        新
      </text>
      <circle cx="15" cy="4" r="3" fill="#f01010" />
    </>
  ]
];

const CHART_TOOLS: [string, ReactNode][] = [
  [
    "报价表",
    <>
      <rect x="1.500" y="2.500" width="15" height="14" fill="#fff" stroke="#303030" />
      <path d="M2 4.500h14" stroke="#284878" strokeWidth="2" />
      <path d="M3 8h5M3 11h5M3 14h5" stroke="#283c78" strokeWidth="1.500" />
      <path d="M10 8h5" stroke="#28a028" strokeWidth="1.500" />
      <path d="M10 11h5" stroke="#e03020" strokeWidth="1.500" />
      <path d="M10 14h5" stroke="#c8a018" strokeWidth="1.500" />
    </>
  ],
  [
    "走势图",
    <>
      <path d="M1 10L6 5l4 5l5-7" stroke="#e01818" strokeWidth="2.500" fill="none" />
      <path d="M12 1h5v6z" fill="#e01818" />
      <path d="M2 12h3v4H2z" fill="#389838" />
      <path d="M7 12h3v4H7z" fill="#e85020" />
      <path d="M12 9h4v7h-4z" fill="#f0b030" />
    </>
  ]
];

const GOLD = ["日", "周", "月", "季", "X"];
const MINUTES = ["1", "3", "5", "15", "30", "60", "2hr", "4hr", "Y"];

function Glyph({ children }: { children: ReactNode }) {
  return (
    <svg width="18" height="18" fill="none">
      {children}
    </svg>
  );
}

const CELL = "flex h-[22px] w-7 items-center justify-center";
const CHIP = "flex h-4 w-4 items-center justify-center rounded-[2px] leading-4 whitespace-nowrap";

function Toolbar() {
  return (
    <div className="flex h-6 shrink-0 items-start border-b-2 border-[#c8c4c4] bg-[#ececec]">
      {TOOLS.map(([name, icon]) => (
        <button key={name} aria-label={name} className={CELL}>
          <Glyph>{icon}</Glyph>
        </button>
      ))}
      <div className="mx-[3px] mt-0.5 h-[18px] w-0.5 border-l border-[#909090]" />
      {CHART_TOOLS.map(([name, icon]) => (
        <button key={name} aria-label={name} className={CELL}>
          <Glyph>{icon}</Glyph>
        </button>
      ))}
      <button className={CELL}>
        <span
          className={clsx(
            CHIP,
            "bg-linear-to-b from-[#ff7850] to-[#e03c20] text-[9px] text-white [font-family:'DejaVu_Sans_Condensed',sans-serif]"
          )}
        >
          Tick
        </span>
      </button>
      {GOLD.map((name, i) => (
        <button key={name} className={CELL}>
          <span
            className={clsx(
              "flex h-[22px] w-[26px] items-center justify-center",
              i === 0 && "rounded-[3px] border border-[#404040] bg-white"
            )}
          >
            <span className={clsx(CHIP, "bg-linear-to-b from-[#e6b428] to-[#c08c08] text-xs text-[#fff8d8]")}>
              {name}
            </span>
          </span>
        </button>
      ))}
      {MINUTES.map((name) => (
        <button key={name} className={CELL}>
          <span
            className={clsx(
              CHIP,
              "bg-linear-to-b from-[#8cc878] to-[#4c9440] text-[#f4ffe0]",
              name.length > 2 ? "text-[9px]" : "text-[11px]"
            )}
          >
            {name}
          </span>
        </button>
      ))}
      <div className="mx-[3px] mt-0.5 h-[18px] w-0.5 border-l border-[#909090]" />
      <button className={CELL}>
        <span className={clsx(CHIP, "bg-linear-to-b from-[#ffa030] to-[#e83c20] text-xs text-white")}>画</span>
      </button>
    </div>
  );
}

const FIELDS = [
  ["起始时间", "2024-04-01"],
  ["结束时间", "2024-06-27"],
  ["期初价", "3439"],
  ["最高价", "3820"],
  ["最低价", "3408"],
  ["期末价", "3535"],
  ["成交量", "86423393"],
  ["仓差", "608128"],
  ["加权均价", "3651"],
  ["区间涨幅", "+2.61%"],
  ["区间振幅", "11.96%"]
];

function RangeDialog({ onClose }: { onClose: () => void }) {
  return (
    <div
      role="dialog"
      aria-label="区间统计"
      className="absolute top-[516px] left-[789px] w-[310px] border border-[#303030] bg-[#f0f0f0] text-black"
    >
      <div className="flex h-[25px] items-center justify-between bg-white pr-2.5 pl-[3px] text-[#9a9a9a]">
        <span>螺纹2410 区间统计</span>
        <button aria-label="关闭窗口" onClick={onClose}>
          <svg width="11" height="11" stroke="#808080">
            <path d="M.5.5l10 10M10.500 .5l-10 10" />
          </svg>
        </button>
      </div>
      <div className="flex pt-3">
        <div className="flex flex-col gap-1">
          {FIELDS.map(([name, value], i) => (
            <div key={name} className="flex h-5 items-center">
              <label htmlFor={`field-${i}`} className="w-[79px] pt-px text-right">
                {name}
              </label>
              <div className="ml-[13px] flex h-5 w-[120px] border border-[#7f9db9] bg-white">
                <input
                  id={`field-${i}`}
                  defaultValue={value}
                  className="w-0 flex-1 px-0.5 pb-0.5 text-[11px] outline-none"
                />
                {i < 2 && (
                  <button
                    aria-label={`调整${name}`}
                    className="flex w-4 items-center justify-center border-l border-[#7f9db9] bg-[#b8d0fa]"
                  >
                    <svg width="8" height="12" fill="#4d6185">
                      <path d="M0 4.500L4 .5l4 4zM0 7.500l4 4l4-4z" />
                    </svg>
                  </button>
                )}
              </div>
            </div>
          ))}
        </div>
        <div className="flex flex-1 flex-col items-center gap-2 pt-[147px] pr-[3px] leading-4">
          <span>分析周期</span>
          <span>共58个</span>
        </div>
      </div>
      <div className="flex justify-end pt-1 pr-4 pb-3">
        <button
          onClick={onClose}
          className="h-5 w-[65px] rounded-[3px] border border-[#003c74] bg-linear-to-b from-white to-[#e8e8e0] leading-[18px]"
        >
          关闭
        </button>
      </div>
    </div>
  );
}

export default function App() {
  const [open, setOpen] = useState(true);

  return (
    <div className="relative flex h-screen flex-col overflow-hidden bg-[#c8c4c4] text-xs [font-family:'Liberation_Sans','Noto_Sans_CJK_SC',sans-serif]">
      <MenuBar />
      <Toolbar />
      <div className="flex min-h-0 flex-1">
        <SideTabs />
        <ChartArea />
        <QuotePanel />
      </div>
      <footer className="h-[5px] shrink-0" />
      {open && <RangeDialog onClose={() => setOpen(false)} />}
    </div>
  );
}
